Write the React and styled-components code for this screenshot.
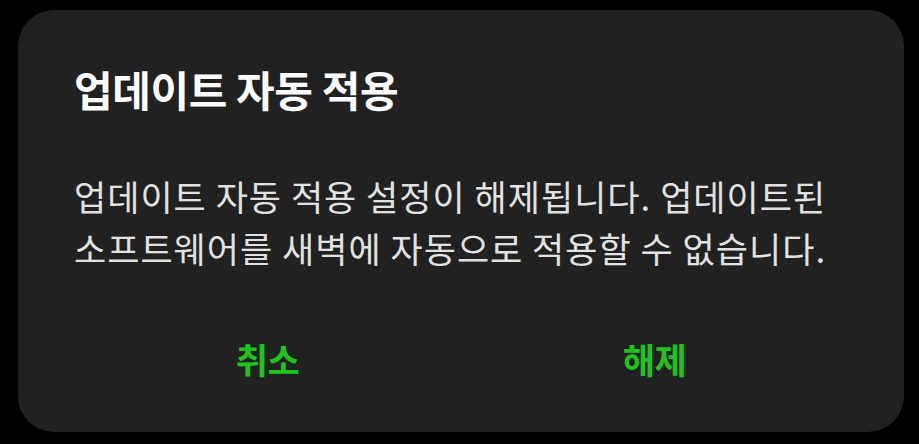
import React from "react";
import styled, { createGlobalStyle } from "styled-components";

const Global = createGlobalStyle`
  html, body { margin: 0; padding: 0; background: #000; }
  body { font-family: "Noto Sans CJK KR", "Noto Sans", sans-serif; }
  * { box-sizing: border-box; }
`;

const Screen = styled.div`
  width: 919px;
  height: 444px;
  background: #000;
  padding: 10px 15px 12px 18px;
`;

const Dialog = styled.div`
  width: 100%;
  height: 100%;
  background: #212121;
  border-radius: 36px;
  padding: 53px 56px 0 56px;
  display: flex;
  flex-direction: column;
`;

const Title = styled.h1`
  margin: 0;
  color: #fafafa;
  font-size: 42px;
  font-weight: 700;
  line-height: 52px;
  letter-spacing: -0.4px;
`;

const Message = styled.p`
  margin: 55px 0 0 0;
  color: #e2e2e2;
  font-size: 35px;
  font-weight: 400;
  line-height: 52px;
  letter-spacing: 1px;
  white-space: nowrap;
`;

const Actions = styled.div`
  display: flex;
  margin-top: 59px;
`;

const Action = styled.button`
  flex: 1;
  background: none;
  border: none;
  padding: 0;
  font-family: inherit;
  color: #20c420;
  font-size: 35px;
  font-weight: 700;
  line-height: 52px;
  letter-spacing: -0.5px;
  text-align: center;
  cursor: pointer;
`;

export default function App() {
  return (
    <>
      <Global />
      <Screen>
        <Dialog>
          <Title>업데이트 자동 적용</Title>
          <Message>
            업데이트 자동 적용 설정이 해제됩니다. 업데이트된
            <br />
            소프트웨어를 새벽에 자동으로 적용할 수 없습니다.
          </Message>
          <Actions>
            <Action>취소</Action>
            <Action>해제</Action>
          </Actions>
        </Dialog>
      </Screen>
    </>
  );
}
